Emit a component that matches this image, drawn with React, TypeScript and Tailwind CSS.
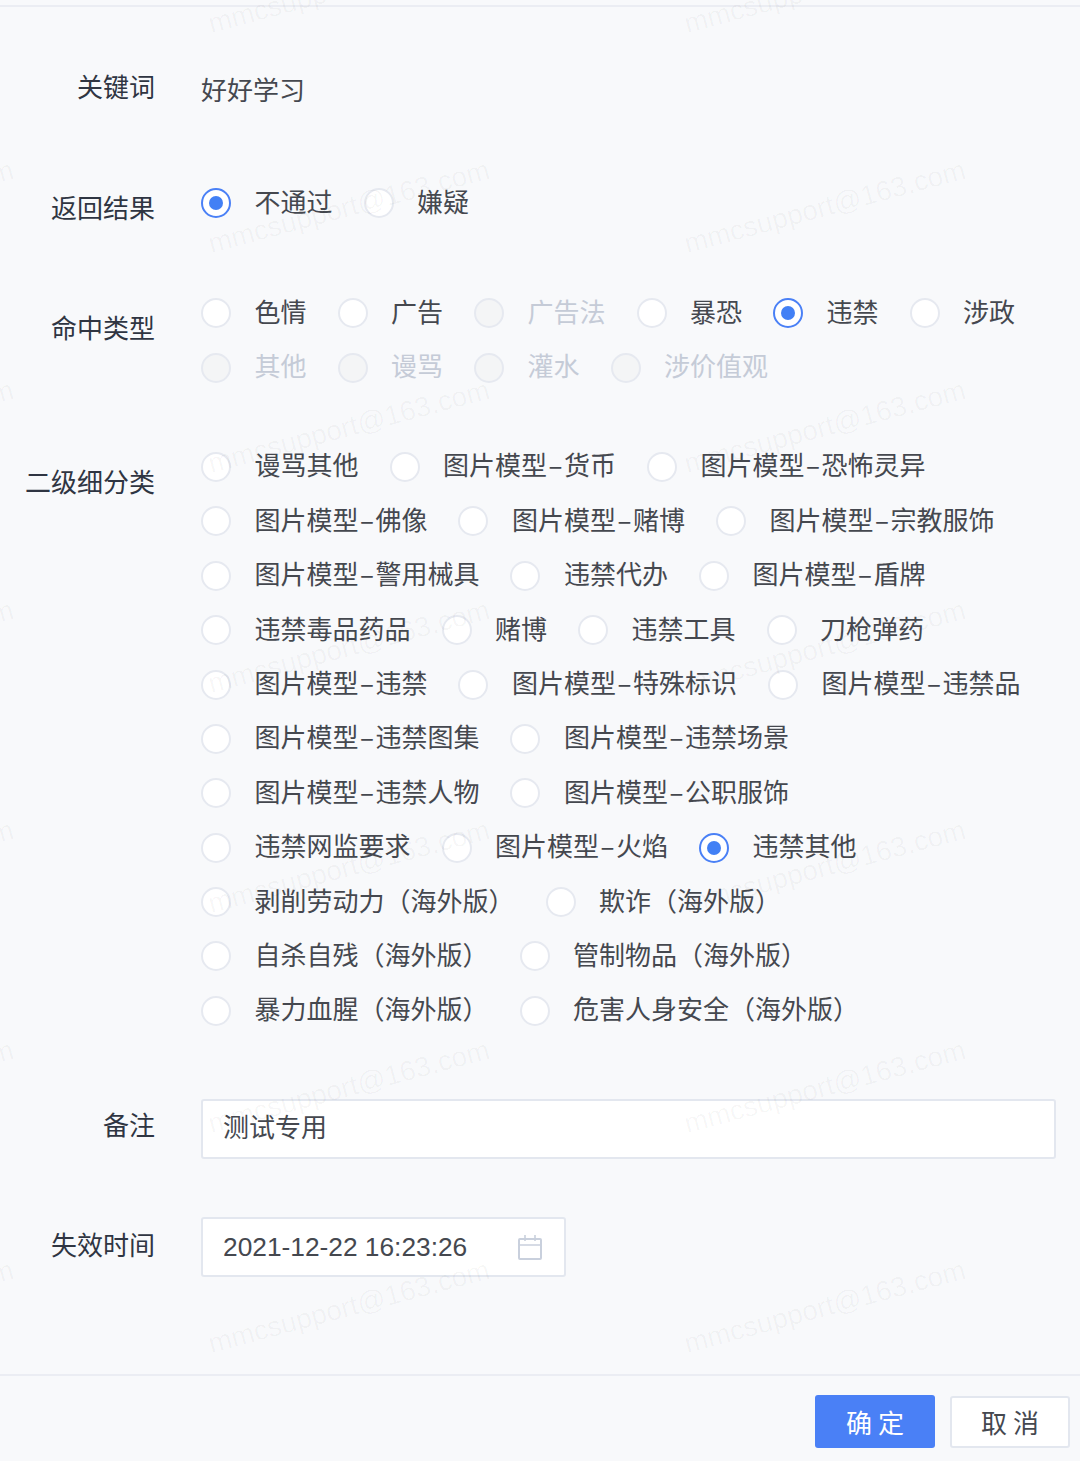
import clsx from 'clsx'

type Option = { label: string; checked?: boolean; disabled?: boolean }

const resultOptions: Option[] = [{ label: '不通过', checked: true }, { label: '嫌疑' }]

const hitRows: Option[][] = [
  [
    { label: '色情' },
    { label: '广告' },
    { label: '广告法', disabled: true },
    { label: '暴恐' },
    { label: '违禁', checked: true },
    { label: '涉政' },
  ],
  [
    { label: '其他', disabled: true },
    { label: '谩骂', disabled: true },
    { label: '灌水', disabled: true },
    { label: '涉价值观', disabled: true },
  ],
]

const subRows: Option[][] = [
  [{ label: '谩骂其他' }, { label: '图片模型–货币' }, { label: '图片模型–恐怖灵异' }],
  [{ label: '图片模型–佛像' }, { label: '图片模型–赌博' }, { label: '图片模型–宗教服饰' }],
  [{ label: '图片模型–警用械具' }, { label: '违禁代办' }, { label: '图片模型–盾牌' }],
  [{ label: '违禁毒品药品' }, { label: '赌博' }, { label: '违禁工具' }, { label: '刀枪弹药' }],
  [{ label: '图片模型–违禁' }, { label: '图片模型–特殊标识' }, { label: '图片模型–违禁品' }],
  [{ label: '图片模型–违禁图集' }, { label: '图片模型–违禁场景' }],
  [{ label: '图片模型–违禁人物' }, { label: '图片模型–公职服饰' }],
  [{ label: '违禁网监要求' }, { label: '图片模型–火焰' }, { label: '违禁其他', checked: true }],
  [{ label: '剥削劳动力（海外版）' }, { label: '欺诈（海外版）' }],
  [{ label: '自杀自残（海外版）' }, { label: '管制物品（海外版）' }],
  [{ label: '暴力血腥（海外版）' }, { label: '危害人身安全（海外版）' }],
]

function Radio({ label, checked, disabled }: Option) {
  const [head, tail] = label.split('–')
  return (
    <label className="flex items-center mr-[31px] whitespace-nowrap">
      <span
        className={clsx(
          'flex items-center justify-center w-[30px] h-[30px] rounded-full',
          checked ? 'border-2 border-[#4a80f6] bg-white' : 'border-2 border-[#e6e9f0]',
          !checked && (disabled ? 'bg-[#f4f5f6]' : 'bg-white')
        )}
      >
        {checked && <span className="w-[14px] h-[14px] rounded-full bg-[#4280f5]" />}
      </span>
      <span className={clsx('ml-[23.5px] -mt-[6px]', disabled ? 'text-[#c5cbd7]' : 'text-[#45484f]')}>
        {head}
        {tail && <span className="mx-[1.5px]">–</span>}
        {tail}
      </span>
    </label>
  )
}

function RadioRow({ options }: { options: Option[] }) {
  return (
    <div className="flex items-center h-[54.4px]">
      {options.map(o => (
        <Radio key={o.label} {...o} />
      ))}
    </div>
  )
}

function FormRow({ label, labelClass, children, className }: {
  label: string
  labelClass: string
  children: React.ReactNode
  className: string
}) {
  return (
    <div className={clsx('flex items-start', className)}>
      <div className={clsx('w-[155px] text-right leading-[54px] text-[#2f3542] whitespace-nowrap', labelClass)}>{label}</div>
      <div className="ml-[46px] flex-1 min-w-0">{children}</div>
    </div>
  )
}

function CalendarIcon() {
  return (
    <svg width="24" height="25" viewBox="0 0 24 25" fill="none" stroke="#c9d0dd" strokeWidth="2">
      <rect x="1" y="4" width="22" height="20" rx="1" />
      <path d="M1 10h22M7 0v6M17 0v6" strokeWidth="1.6" />
    </svg>
  )
}

function Watermarks() {
  return (
    <div className="absolute left-[-365px] top-[-123px] grid grid-cols-[repeat(4,476px)] auto-rows-[220px] pointer-events-none">
      {Array.from({ length: 28 }).map((_, i) => (
        <div key={i} className="flex items-center justify-center">
          <span className="-rotate-[15deg] text-[28px] whitespace-nowrap text-black/[0.035] font-['Liberation_Sans',sans-serif]">
            mmcsupport@163.com
          </span>
        </div>
      ))}
    </div>
  )
}

export default function App() {
  return (
    <div className="relative w-[1080px] h-[1461px] overflow-hidden bg-[#f8f9fb] text-[26px] font-['Noto_Sans_CJK_SC','Noto_Sans',sans-serif]">
      <div className="h-[7px] border-b-2 border-[#ebedf3]" />

      <FormRow label="关键词" labelClass="-mt-[4px]" className="pt-[56px]">
        <div className="-mt-[1px] leading-[54px] text-[#45484f]">好好学习</div>
      </FormRow>

      <FormRow label="返回结果" labelClass="mt-[4px]" className="pt-[60px]">
        <RadioRow options={resultOptions} />
      </FormRow>

      <FormRow label="命中类型" labelClass="mt-[14px]" className="pt-[52px]">
        {hitRows.map((row, i) => (
          <RadioRow key={i} options={row} />
        ))}
      </FormRow>

      <FormRow label="二级细分类" labelClass="mt-[14px]" className="pt-[45px]">
        {subRows.map((row, i) => (
          <RadioRow key={i} options={row} />
        ))}
      </FormRow>

      <FormRow label="备注" labelClass="-mt-[2px]" className="pt-[61px]">
        <div className="flex items-center h-[60px] w-[855px] px-[20px] pb-[8px] bg-white border-2 border-[#e3e7ef] rounded-[3px] text-[#45484f]">
          测试专用
        </div>
      </FormRow>

      <FormRow label="失效时间" labelClass="mt-[0px]" className="pt-[58px]">
        <div className="flex items-center justify-between h-[60px] w-[365px] pl-[20px] pr-[22px] bg-white border-2 border-[#e3e7ef] rounded-[3px] text-[#45484f]">
          <span className="pt-[2px] text-[26.3px] font-['Liberation_Sans',sans-serif]">2021-12-22 16:23:26</span>
          <CalendarIcon />
        </div>
      </FormRow>

      <div className="mt-[97px] h-[2px] bg-[#ebedf3]" />

      <div className="flex justify-end items-center pt-[19px] pr-[10px] gap-[15px]">
        <button className="w-[120px] h-[53px] rounded-[3px] bg-[#4a80f6] text-white">确 定</button>
        <button className="w-[120px] h-[52px] rounded-[3px] bg-white border-2 border-[#e3e7ef] text-[#45484f]">取 消</button>
      </div>

      <Watermarks />
    </div>
  )
}
